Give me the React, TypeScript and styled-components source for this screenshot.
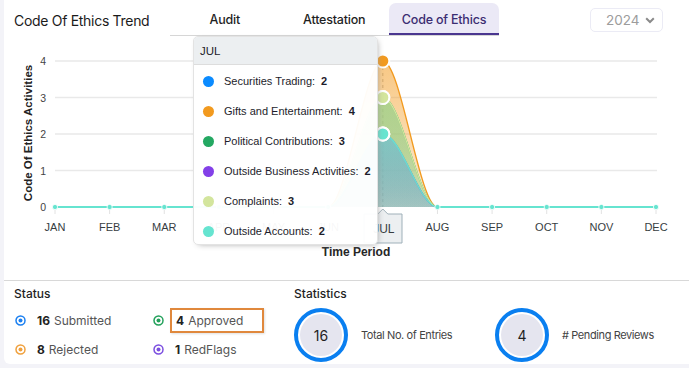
import React from "react";
import styled, { createGlobalStyle } from "styled-components";

const GlobalStyle = createGlobalStyle`
  html, body { margin: 0; padding: 0; background: #f3f3f8; }
  body { font-family: Inter, "Noto Sans", sans-serif; color: #1f1f1f; }
  * { box-sizing: border-box; }
`;

const Card = styled.div`
  margin-left: 4px;
  width: 700px;
  height: 364px;
  background: #ffffff;
  border-bottom-left-radius: 6px;
  display: flex;
  flex-direction: column;
  overflow: hidden;
`;

const Header = styled.div`
  display: grid;
  grid-template-columns: 156px 329px auto;
  height: 36px;
  flex-shrink: 0;
  padding-left: 10px;
`;

const Title = styled.h1`
  margin: 0;
  align-self: center;
  font-size: 14px;
  font-weight: 400;
  letter-spacing: -0.3px;
  color: #1b1b1b;
  padding-top: 5px;
  white-space: nowrap;
`;

const TabList = styled.div`
  display: flex;
  align-self: end;
  border-bottom: 1px solid #d6d6d6;
  height: 33px;
`;

const Tab = styled.div<{ $active?: boolean }>`
  width: ${(p) => (p.$active ? 110 : 109.5)}px;
  height: 32px;
  display: flex;
  align-items: center;
  justify-content: center;
  font-size: 12.5px;
  font-weight: 500;
  letter-spacing: -0.2px;
  color: ${(p) => (p.$active ? "#3b2d72" : "#1f1f1f")};
  background: ${(p) => (p.$active ? "#ebe9f6" : "transparent")};
  border-radius: 7px 7px 0 0;
  border-bottom: 2px solid ${(p) => (p.$active ? "#4a3690" : "transparent")};
  padding-top: 2px;
`;

const SelectWrap = styled.div`
  padding-left: 91px;
  padding-top: 8px;
`;

const Select = styled.div`
  width: 73px;
  height: 24px;
  border: 1px solid #ebebf5;
  border-radius: 5px;
  display: flex;
  align-items: center;
  justify-content: space-between;
  padding: 0 7px 0 15px;
  font-size: 13.5px;
  color: #9c9c9c;
`;

const ChartArea = styled.div`
  position: relative;
  height: 244px;
  flex-shrink: 0;
`;

const ChartSvg = styled.svg`
  display: block;
  font-family: "Liberation Sans", Arial, sans-serif;
`;

const Tooltip = styled.div`
  position: absolute;
  left: 189px;
  top: 0;
  width: 185px;
  height: 209px;
  background: rgba(255, 255, 255, 0.96);
  border: 1px solid #e3e3e3;
  border-radius: 5px;
  box-shadow: 2px 2px 6px -3px #999;
  font-family: "Liberation Sans", Arial, sans-serif;
  font-size: 11px;
  color: #1d1d2b;
  overflow: hidden;
`;

const TooltipHeader = styled.div`
  height: 28px;
  background: #eceff1;
  border-bottom: 1px solid #dddddd;
  display: flex;
  align-items: center;
  padding-left: 6px;
  font-size: 11.5px;
`;

const TooltipBody = styled.div`
  display: flex;
  flex-direction: column;
  padding-top: 1px;
`;

const TooltipRow = styled.div`
  height: 30px;
  display: flex;
  align-items: center;
  padding-left: 9px;
`;

const Marker = styled.span<{ $color: string }>`
  width: 11px;
  height: 11px;
  border-radius: 50%;
  background: ${(p) => p.$color};
  margin-right: 10px;
  flex-shrink: 0;
`;

const TooltipValue = styled.b`
  margin-left: 6px;
  font-weight: 700;
`;

const Bottom = styled.div`
  border-top: 1px solid #d8d8d8;
  display: flex;
  padding: 5px 10px 0;
  flex: 1;
  min-height: 0;
`;

const Section = styled.div<{ $width?: number }>`
  width: ${(p) => (p.$width ? `${p.$width}px` : "auto")};
  flex-shrink: 0;
  display: flex;
  flex-direction: column;
`;

const SectionTitle = styled.div`
  font-size: 12px;
  font-weight: 500;
  color: #1f1f1f;
  height: 16px;
  line-height: 16px;
`;

const StatusGrid = styled.div`
  display: grid;
  grid-template-columns: 138px 138px;
  grid-auto-rows: 29px;
  margin-top: 4px;
`;

const StatusItem = styled.div`
  display: flex;
  align-items: center;
  padding-left: 1px;
`;

const StatusText = styled.div<{ $highlight?: boolean }>`
  display: flex;
  align-items: center;
  gap: 4px;
  font-size: 12px;
  margin-left: ${(p) => (p.$highlight ? "6px" : "11px")};
  height: 25px;
  padding: 0 0 0 ${(p) => (p.$highlight ? "4px" : "0")};
  border: ${(p) => (p.$highlight ? "2px solid #e0883c" : "none")};
  box-shadow: ${(p) => (p.$highlight ? "1px 1px 2px rgba(0,0,0,0.12)" : "none")};
  width: ${(p) => (p.$highlight ? "94px" : "auto")};
`;

const StatusCount = styled.b`
  font-weight: 700;
  color: #222;
`;

const StatusLabel = styled.span`
  color: #555;
`;

const StatsRow = styled.div`
  display: flex;
  margin-top: 6px;
`;

const Stat = styled.div`
  width: 201px;
  display: flex;
  align-items: center;
  gap: 13px;
`;

const Ring = styled.div`
  width: 54px;
  height: 54px;
  flex-shrink: 0;
  border-radius: 50%;
  border: 4px solid #0a7ff0;
  padding: 2px;
  display: flex;
`;

const RingInner = styled.div`
  flex: 1;
  border-radius: 50%;
  background: #e5e5ef;
  display: flex;
  align-items: center;
  justify-content: center;
  font-size: 14px;
  color: #1f1f1f;
`;

const StatLabel = styled.div`
  font-size: 11px;
  letter-spacing: -0.4px;
  color: #444;
`;

const StatusIcon = ({ color }: { color: string }) => (
  <svg width="11" height="11" viewBox="0 0 11 11">
    <circle cx="5.5" cy="5.5" r="4.5" fill="none" stroke={color} strokeWidth="1.5" />
    <circle cx="5.5" cy="5.5" r="2" fill={color} />
  </svg>
);

const months = ["JAN", "FEB", "MAR", "APR", "MAY", "JUN", "JUL", "AUG", "SEP", "OCT", "NOV", "DEC"];

const series = [
  { name: "Securities Trading", color: "#0b8bff", value: 2 },
  { name: "Gifts and Entertainment", color: "#f29a1f", value: 4 },
  { name: "Political Contributions", color: "#24a862", value: 3 },
  { name: "Outside Business Activities", color: "#8340e8", value: 2 },
  { name: "Complaints", color: "#d3e59d", value: 3 },
  { name: "Outside Accounts", color: "#66e4d0", value: 2 },
];

const X0 = 55;
const XSTEP = (656 - 55) / 11;
const Y0 = 207;
const YU = 36.5;
const xAt = (i: number) => X0 + XSTEP * i;
const yAt = (v: number) => Y0 - YU * v;

const areaPath = (v: number) => {
  const a = xAt(5);
  const b = xAt(6);
  const c = xAt(7);
  const y = yAt(v);
  const k = XSTEP / 3;
  return `M ${a} ${Y0} C ${a + k} ${Y0} ${b - k} ${y} ${b} ${y} C ${b + k} ${y} ${c - k} ${Y0} ${c} ${Y0}`;
};

const Chart = () => {
  const julX = xAt(6);
  return (
    <ChartSvg width="685" height="244" viewBox="4 36 685 244">
      <defs>
        {series.map((s, i) => (
          <linearGradient key={i} id={`g${i}`} x1="0" y1="0" x2="0" y2="1">
            <stop offset="0" stopColor={s.color} stopOpacity="0.55" />
            <stop offset="1" stopColor={s.color} stopOpacity="0.2" />
          </linearGradient>
        ))}
      </defs>
      {[0, 1, 2, 3, 4].map((v) => (
        <g key={v}>
          {v > 0 && <line x1={X0} x2={657} y1={yAt(v)} y2={yAt(v)} stroke="#e9e9e9" strokeWidth="1.3" />}
          <text x={46} y={yAt(v) + 4} fontSize="10.5" fill="#444" textAnchor="end">
            {v}
          </text>
        </g>
      ))}
      <text
        transform={`translate(32 ${133}) rotate(-90)`}
        fontSize="11.5"
        fontWeight="700"
        fill="#222"
        textAnchor="middle"
      >
        Code Of Ethics Activities
      </text>
      {months.map((m, i) => (
        <g key={m}>
          <line x1={xAt(i)} x2={xAt(i)} y1={209} y2={214} stroke="#e2e2e2" strokeWidth="1" />
          {i !== 6 && (
            <text x={xAt(i)} y={231} fontSize="11" fill="#373d3f" textAnchor="middle">
              {m}
            </text>
          )}
        </g>
      ))}
      <text x={356} y={256} fontSize="12" fontWeight="700" fill="#262626" textAnchor="middle">
        Time Period
      </text>
      <line x1={julX} x2={julX} y1={yAt(4)} y2={Y0} stroke="#b4b4b4" strokeDasharray="3 3" />
      {series.map((s, i) => (
        <g key={s.name}>
          <path d={`${areaPath(s.value)} Z`} fill={`url(#g${i})`} />
          <path d={areaPath(s.value)} fill="none" stroke={s.color} strokeWidth="1.3" />
        </g>
      ))}
      <line x1={X0} x2={xAt(5)} y1={Y0} y2={Y0} stroke="#66e4d0" strokeWidth="2" />
      <line x1={xAt(7)} x2={657} y1={Y0} y2={Y0} stroke="#66e4d0" strokeWidth="2" />
      {months.map((m, i) =>
        i === 6 ? null : <circle key={m} cx={xAt(i)} cy={Y0} r="2.6" fill="#66e4d0" stroke="#fff" strokeWidth="0.8" />
      )}
      {series.map((s) => (
        <circle key={s.name} cx={julX} cy={yAt(s.value)} r="6.5" fill={s.color} stroke="#fff" strokeWidth="2" />
      ))}
      <path
        d={`M 364 214 L ${julX - 5} 214 L ${julX} 209 L ${julX + 5} 214 L 402 214 L 402 243 L 364 243 Z`}
        fill="#eceff1"
        stroke="#9fb0b9"
        strokeWidth="1"
      />
      <text x={julX + 1} y={233} fontSize="12" fill="#373d3f" textAnchor="middle">
        JUL
      </text>
    </ChartSvg>
  );
};

export default function App() {
  return (
    <>
      <GlobalStyle />
      <Card>
        <Header>
          <Title>Code Of Ethics Trend</Title>
          <TabList>
            <Tab>Audit</Tab>
            <Tab>Attestation</Tab>
            <Tab $active>Code of Ethics</Tab>
          </TabList>
          <SelectWrap>
            <Select>
              2024
              <svg width="10" height="7" viewBox="0 0 10 7">
                <path d="M1.2 1.3 L5 5 L8.8 1.3" fill="none" stroke="#8a8a8a" strokeWidth="2" />
              </svg>
            </Select>
          </SelectWrap>
        </Header>
        <ChartArea>
          <Chart />
          <Tooltip>
            <TooltipHeader>JUL</TooltipHeader>
            <TooltipBody>
              {series.map((s) => (
                <TooltipRow key={s.name}>
                  <Marker $color={s.color} />
                  {s.name}:<TooltipValue>{s.value}</TooltipValue>
                </TooltipRow>
              ))}
            </TooltipBody>
          </Tooltip>
        </ChartArea>
        <Bottom>
          <Section $width={280}>
            <SectionTitle>Status</SectionTitle>
            <StatusGrid>
              <StatusItem>
                <StatusIcon color="#1a7ff0" />
                <StatusText>
                  <StatusCount>16</StatusCount>
                  <StatusLabel>Submitted</StatusLabel>
                </StatusText>
              </StatusItem>
              <StatusItem>
                <StatusIcon color="#22a05a" />
                <StatusText $highlight>
                  <StatusCount>4</StatusCount>
                  <StatusLabel>Approved</StatusLabel>
                </StatusText>
              </StatusItem>
              <StatusItem>
                <StatusIcon color="#f0a03c" />
                <StatusText>
                  <StatusCount>8</StatusCount>
                  <StatusLabel>Rejected</StatusLabel>
                </StatusText>
              </StatusItem>
              <StatusItem>
                <StatusIcon color="#7b4ee0" />
                <StatusText>
                  <StatusCount>1</StatusCount>
                  <StatusLabel>RedFlags</StatusLabel>
                </StatusText>
              </StatusItem>
            </StatusGrid>
          </Section>
          <Section>
            <SectionTitle>Statistics</SectionTitle>
            <StatsRow>
              <Stat>
                <Ring>
                  <RingInner>16</RingInner>
                </Ring>
                <StatLabel>Total No. of Entries</StatLabel>
              </Stat>
              <Stat>
                <Ring>
                  <RingInner>4</RingInner>
                </Ring>
                <StatLabel># Pending Reviews</StatLabel>
              </Stat>
            </StatsRow>
          </Section>
        </Bottom>
      </Card>
    </>
  );
}
